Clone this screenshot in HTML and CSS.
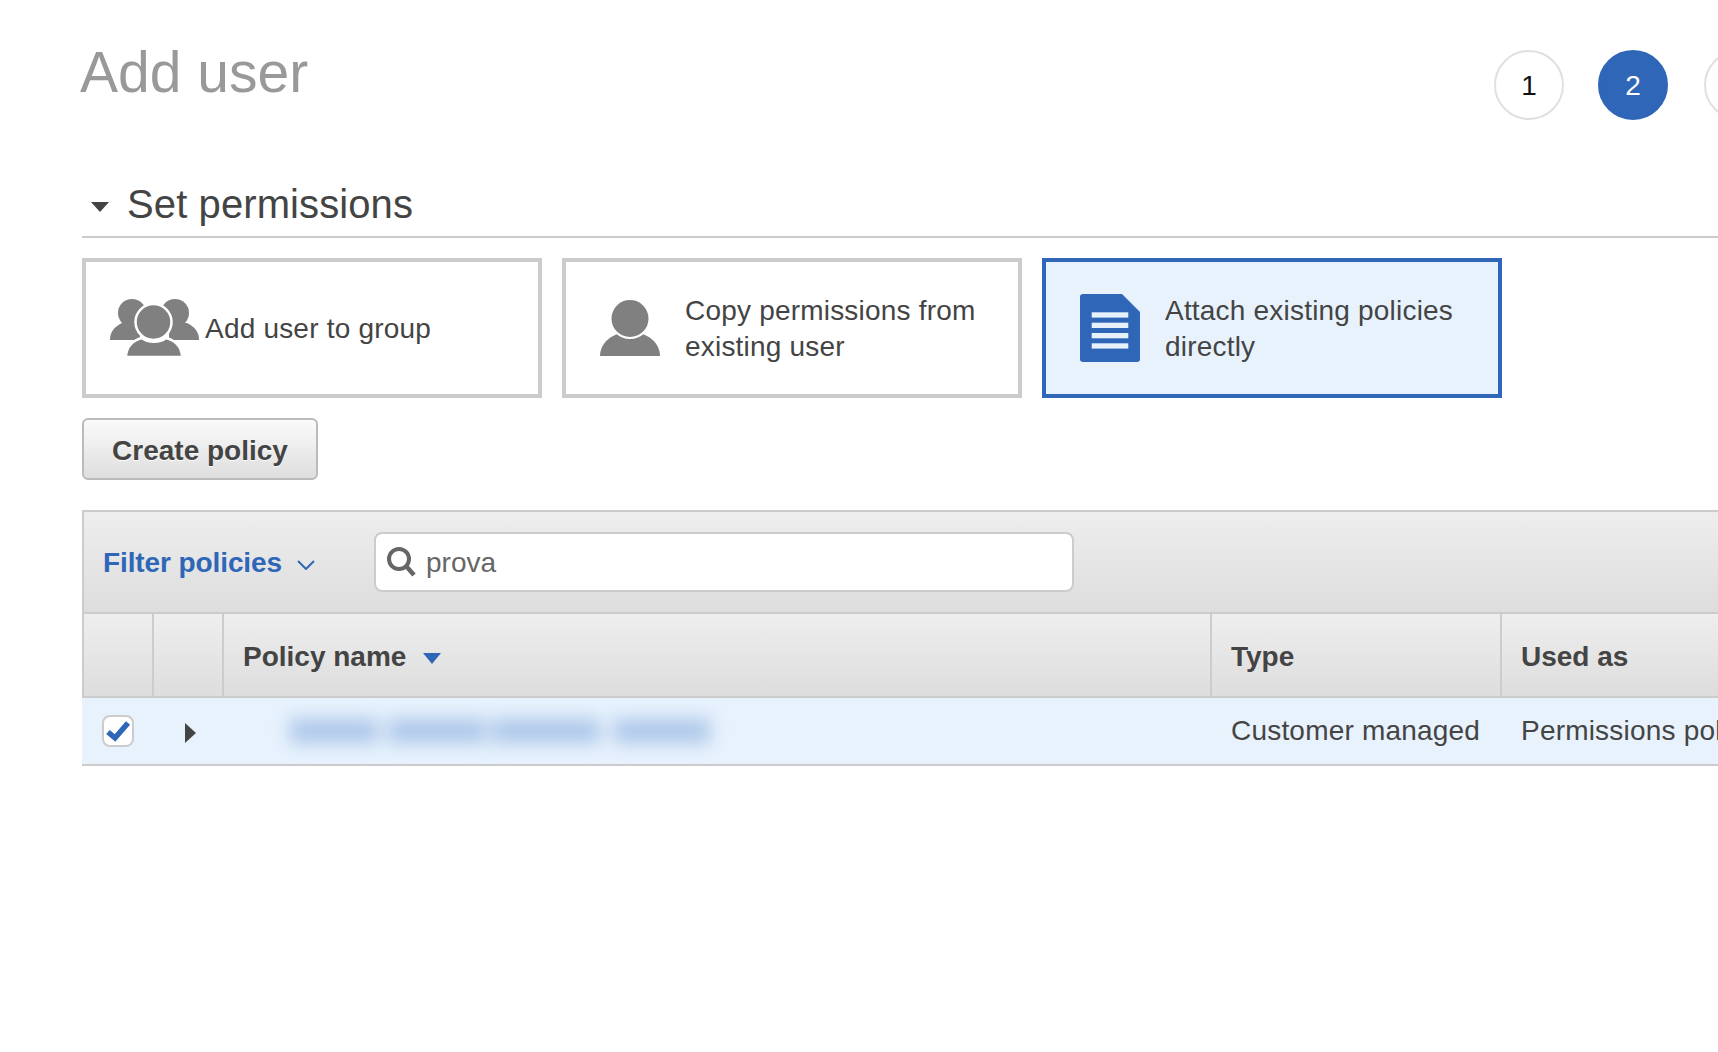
FILE: index.html
```html
<!DOCTYPE html>
<html lang="en">
<head>
    <meta charset="UTF-8">
    <meta name="viewport" content="width=device-width, initial-scale=1.0">
    <title>Add user</title>
    <link rel="stylesheet" href="styles.css">
</head>
<body>
    <div class="page-header">
        <h1 class="page-title">Add user</h1>
        <div class="steps">
            <div class="step">1</div>
            <div class="step step-active">2</div>
            <div class="step">3</div>
        </div>
    </div>

    <h2 class="section-title"><span class="section-caret"></span>Set permissions</h2>

    <div class="cards">
        <div class="card">
            <svg class="card-icon" viewBox="0 0 95 68">
                <circle cx="22" cy="19" r="14" fill="#808080"/>
                <circle cx="65" cy="19" r="14" fill="#808080"/>
                <path d="M0 46C0 38 4 33 12 29H30V46Z" fill="#808080"/>
                <path d="M89 46C89 38 85 33 77 29H59V46Z" fill="#808080"/>
                <path d="M16 63C16 52 24 46 32 44C38 49 50 49 56 44C64 46 72 52 72 63Z" fill="#808080" stroke="#fff" stroke-width="2.5"/>
                <circle cx="43.5" cy="28" r="18" fill="#808080" stroke="#fff" stroke-width="2.5"/>
            </svg>
            <div class="card-text">Add user to group</div>
        </div>
        <div class="card">
            <svg class="card-icon" viewBox="0 0 95 68">
                <path d="M10 62C10 49 22 38 40 38C58 38 70 49 70 62Z" fill="#808080"/>
                <circle cx="40" cy="24.5" r="19.5" fill="#808080" stroke="#fff" stroke-width="2"/>
            </svg>
            <div class="card-text">Copy permissions from existing user</div>
        </div>
        <div class="card card-selected">
            <svg class="card-icon" viewBox="0 0 95 68">
                <path d="M13 0H52L70 18V65a3 3 0 0 1-3 3H13a3 3 0 0 1-3-3V3a3 3 0 0 1 3-3Z" fill="#2f66b7"/>
                <rect x="21.7" y="18.3" width="36.6" height="5.3" fill="#e7f2fd"/>
                <rect x="21.7" y="28.7" width="36.6" height="5.3" fill="#e7f2fd"/>
                <rect x="21.7" y="39" width="36.6" height="5.3" fill="#e7f2fd"/>
                <rect x="21.7" y="49.3" width="36.6" height="5.3" fill="#e7f2fd"/>
            </svg>
            <div class="card-text">Attach existing policies directly</div>
        </div>
    </div>

    <button class="create-button">Create policy</button>

    <div class="policies">
        <div class="toolbar">
            <span class="filter-label">Filter policies</span>
            <svg class="filter-chevron" viewBox="0 0 18 10">
                <path d="M1 1L9 9L17 1" fill="none" stroke="#2f66b7" stroke-width="2"/>
            </svg>
            <div class="search-box">
                <svg class="search-icon" viewBox="0 0 29 30">
                    <circle cx="12" cy="12" r="10" fill="none" stroke="#666" stroke-width="4"/>
                    <path d="M19 19L27 28" fill="none" stroke="#666" stroke-width="4.5"/>
                </svg>
                <input class="search-input" type="text" value="prova">
            </div>
        </div>

        <table class="policy-table">
            <thead>
                <tr>
                    <th class="col-check"></th>
                    <th class="col-arrow"></th>
                    <th class="col-name">Policy name<span class="sort-arrow"></span></th>
                    <th class="col-type">Type</th>
                    <th class="col-used">Used as</th>
                </tr>
            </thead>
            <tbody>
                <tr>
                    <td>
                        <span class="checkbox">
                            <svg viewBox="0 0 28 28">
                                <path d="M4 15L11 21L24 6" fill="none" stroke="#2f66b7" stroke-width="5.5"/>
                            </svg>
                        </span>
                    </td>
                    <td><span class="row-arrow"></span></td>
                    <td>
                        <div class="blurred-name">
                            <span class="blur-a"></span>
                            <span class="blur-b"></span>
                            <span class="blur-c"></span>
                            <span class="blur-d"></span>
                        </div>
                    </td>
                    <td>Customer managed</td>
                    <td>Permissions policy</td>
                </tr>
            </tbody>
        </table>
    </div>
</body>
</html>
```

FILE: styles.css
```css
html, body {
    height: 100%;
}
body {
    font-family: "Liberation Sans", Arial, sans-serif;
    font-size: 28px;
    color: #444;
    margin: 0;
    padding-left: 82px;
    background-color: #fff;
    overflow: hidden;
}

.page-header {
    display: flex;
    justify-content: space-between;
    align-items: flex-start;
    padding-top: 44px;
}
.page-title {
    margin: 0 0 0 -2px;
    font-size: 57px;
    line-height: 56px;
    font-weight: normal;
    color: #999;
}
.steps {
    display: flex;
    gap: 34px;
    width: 224px;
    margin-top: 6px;
}
.step {
    flex: none;
    width: 70px;
    height: 70px;
    box-sizing: border-box;
    border: 2px solid #e0e0e0;
    border-radius: 50%;
    padding-top: 2px;
    display: flex;
    align-items: center;
    justify-content: center;
    color: #111;
}
.step-active {
    margin-right: 2px;
    background-color: #2f66b7;
    border-color: #2f66b7;
    color: #fff;
}

.section-title {
    display: flex;
    align-items: center;
    margin: 63px 0 0;
    padding: 1px 0 12px;
    border-bottom: 2px solid #ccc;
    font-size: 40px;
    line-height: 40px;
    font-weight: normal;
    letter-spacing: 0.1px;
}
.section-caret {
    width: 0;
    height: 0;
    margin: 6px 18px 0 9px;
    border-left: 9px solid transparent;
    border-right: 9px solid transparent;
    border-top: 10px solid #444;
}

.cards {
    display: flex;
    gap: 20px;
    margin-top: 20px;
}
.card {
    display: flex;
    align-items: center;
    width: 460px;
    height: 140px;
    box-sizing: border-box;
    border: 4px solid #ccc;
    padding-left: 24px;
    line-height: 36px;
}
.card-selected {
    border-color: #2f66b7;
    background-color: #e7f2fd;
}
.card-icon {
    flex: none;
    width: 95px;
    height: 68px;
}
.card-text {
    padding: 2px 20px 0 0;
    letter-spacing: 0.2px;
}

.create-button {
    display: block;
    width: 236px;
    height: 62px;
    margin-top: 20px;
    padding: 4px 0 0;
    border: 2px solid #bbb;
    border-radius: 6px;
    background: linear-gradient(#fafafa, #dedede);
    font-family: inherit;
    font-size: 28px;
    font-weight: bold;
    color: #444;
    text-shadow: 0 1px 0 #fff;
}

.policies {
    margin-top: 30px;
}
.toolbar {
    display: flex;
    align-items: center;
    height: 104px;
    box-sizing: border-box;
    border-top: 2px solid #ccc;
    border-left: 2px solid #ccc;
    border-bottom: 2px solid #ccc;
    padding-left: 19px;
    background: linear-gradient(#eee, #ddd);
}
.filter-label {
    padding-top: 1px;
    font-weight: bold;
    letter-spacing: -0.1px;
    color: #2f66b7;
}
.filter-chevron {
    width: 18px;
    height: 10px;
    margin: 6px 59px 0 15px;
}
.search-box {
    display: flex;
    align-items: center;
    width: 700px;
    height: 60px;
    box-sizing: border-box;
    border: 2px solid #ccc;
    border-radius: 8px;
    padding-left: 11px;
    background-color: #fff;
}
.search-icon {
    flex: none;
    width: 29px;
    height: 30px;
}
.search-input {
    flex: 1;
    min-width: 0;
    margin-left: 10px;
    padding: 1px 0 0;
    border: none;
    outline: none;
    background: transparent;
    font-family: inherit;
    font-size: 28px;
    color: #666;
}

.policy-table {
    width: 1636px;
    table-layout: fixed;
    border-collapse: separate;
    border-spacing: 0;
}
.policy-table th {
    height: 84px;
    box-sizing: border-box;
    padding: 3px 19px 0;
    border-right: 2px solid #ccc;
    border-bottom: 2px solid #ccc;
    background: linear-gradient(#eee, #ddd);
    text-align: left;
    font-weight: bold;
    white-space: nowrap;
}
.policy-table th:first-child {
    border-left: 2px solid #ccc;
}
.policy-table th:last-child {
    border-right: none;
}
.col-check { width: 72px; }
.col-arrow { width: 70px; }
.col-name { width: 988px; }
.col-type { width: 290px; }
.col-used { width: 216px; }

.policy-table td {
    height: 68px;
    box-sizing: border-box;
    padding: 0 19px;
    border-bottom: 2px solid #ccc;
    background-color: #e7f2fd;
    white-space: nowrap;
    letter-spacing: 0.2px;
}
.sort-arrow {
    display: inline-block;
    width: 0;
    height: 0;
    margin-left: 17px;
    vertical-align: 2px;
    border-left: 9px solid transparent;
    border-right: 9px solid transparent;
    border-top: 11px solid #2f66b7;
}
.checkbox {
    display: block;
    width: 32px;
    height: 32px;
    box-sizing: border-box;
    margin-left: 1px;
    border: 2px solid #ccc;
    border-radius: 8px;
    background-color: #fff;
}
.checkbox svg {
    display: block;
    width: 28px;
    height: 28px;
}
.row-arrow {
    display: block;
    width: 0;
    height: 0;
    margin: 4px 0 0 12px;
    border-top: 10px solid transparent;
    border-bottom: 10px solid transparent;
    border-left: 11px solid #444;
}
.blurred-name {
    display: flex;
    height: 24px;
    margin-left: 47px;
    filter: blur(9px);
}
.blurred-name span {
    display: block;
    height: 100%;
    background-color: #acc6e8;
}
.blur-a { width: 88px; }
.blur-b { width: 98px; margin-left: 10px; }
.blur-c { width: 108px; margin-left: 6px; }
.blur-d { width: 96px; margin-left: 14px; }
```
